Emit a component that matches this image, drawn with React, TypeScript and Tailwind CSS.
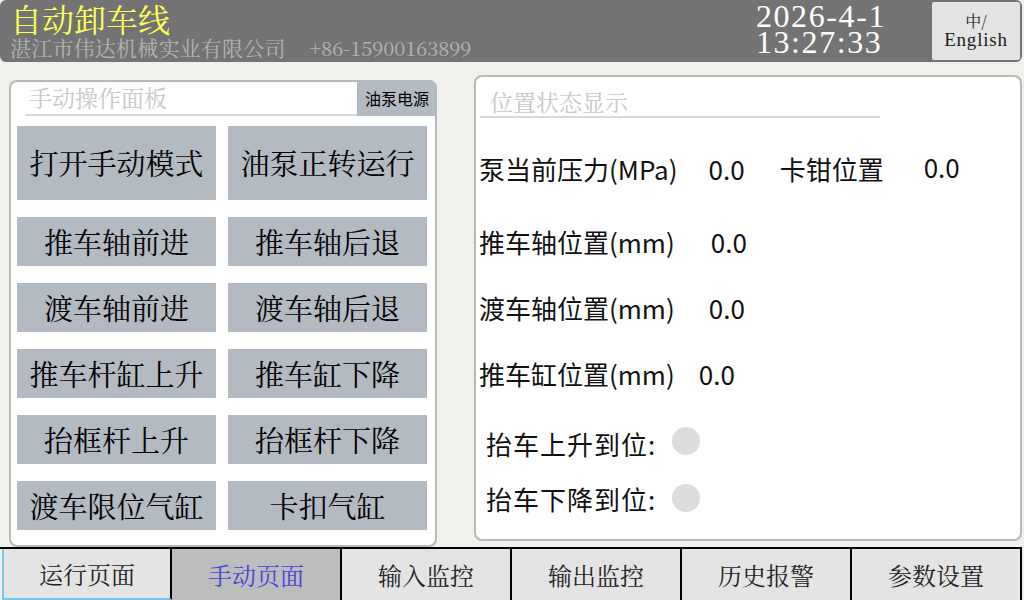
import React from "react";

const SERIF = { fontFamily: '"Noto Serif CJK SC", "Liberation Serif", "Noto Sans CJK SC", serif' };
const SANS = { fontFamily: '"Noto Sans CJK SC", "Noto Sans", sans-serif' };

const buttons: [string, string][] = [
  ["推车轴前进", "推车轴后退"],
  ["渡车轴前进", "渡车轴后退"],
  ["推车杆缸上升", "推车缸下降"],
  ["抬框杆上升", "抬框杆下降"],
  ["渡车限位气缸", "卡扣气缸"],
];

const tabs = ["运行页面", "手动页面", "输入监控", "输出监控", "历史报警", "参数设置"];

function OpButton({ label, tall }: { label: string; tall?: boolean }) {
  return (
    <div
      className={`flex items-center justify-center bg-[#b3bac2] text-[29px] text-black ${tall ? "h-[74px]" : "h-[49px]"}`}
      style={SERIF}
    >
      {label}
    </div>
  );
}

function Lamp() {
  return <span className="inline-block h-[28px] w-[28px] rounded-full bg-[#dcdcdc]" />;
}

export default function App() {
  return (
    <div className="relative h-[600px] w-[1024px] overflow-hidden bg-[#f0f0ec]">
      {/* header bar */}
      <div className="flex h-[62px] w-[1022px] items-stretch rounded-[6px] bg-[#737373]">
        <div className="flex flex-1 flex-col pl-[10px]">
          <div className="mt-[1px] h-[34px] text-[32px] leading-[34px] text-[#ffff55]" style={SERIF}>
            自动卸车线
          </div>
          <div className="mt-[1px] flex items-baseline text-[21px] leading-[22px] text-[#b4b4b4]" style={SERIF}>
            <span className="tracking-[0.2px]">湛江市伟达机械实业有限公司</span>
            <span className="ml-[24px] text-[20px]">+86-15900163899</span>
          </div>
        </div>
        <div
          className="mr-[46px] flex flex-col pt-[3px] text-[32px] leading-[26px] text-white"
          style={{ fontFamily: '"Liberation Serif", serif' }}
        >
          <span className="tracking-[1.6px]">2026-4-1</span>
          <span className="tracking-[1.6px]">13:27:33</span>
        </div>
        <div className="my-[2px] mr-[2px] flex w-[88px] flex-col items-center justify-center rounded-[2px] bg-[#e4e4e4] text-[19px] leading-[20px] text-[#222]">
          <span style={SERIF} className="text-[16px] leading-[18px]">中/</span>
          <span style={{ fontFamily: '"Liberation Serif", serif' }} className="tracking-[0.8px]">English</span>
        </div>
      </div>

      {/* body */}
      <div className="flex h-[485px] items-start">
        {/* manual operation panel */}
        <div className="ml-[9px] mt-[18px] h-[467px] w-[428px] rounded-[8px] border-2 border-[#b8b8b8] bg-white">
          <div className="flex h-[34px] items-stretch">
            <div className="ml-[14px] flex-1 border-b-2 border-[#d8d8d8] pl-[4px] text-[23px] leading-[32px] text-[#c8c8c8]" style={SERIF}>
              手动操作面板
            </div>
            <div
              className="-mr-[2px] -mt-[2px] flex h-[36px] w-[80px] items-center justify-center rounded-tr-[8px] bg-[#b3bac2] text-[16px] text-black"
              style={SANS}
            >
              油泵电源
            </div>
          </div>
          <div className="ml-[6px] mt-[10px] grid grid-cols-[199px_199px] gap-x-[12px] gap-y-[17px]">
            <OpButton label="打开手动模式" tall />
            <OpButton label="油泵正转运行" tall />
            {buttons.map(([a, b]) => (
              <React.Fragment key={a}>
                <OpButton label={a} />
                <OpButton label={b} />
              </React.Fragment>
            ))}
          </div>
        </div>

        {/* position status panel */}
        <div className="ml-[37px] mt-[13px] h-[466px] w-[548px] rounded-[8px] border-2 border-[#b8b8b8] bg-white">
          <div className="ml-[4px] mt-[10px] w-[400px] border-b-2 border-[#d8d8d8] pl-[10px] text-[23px] leading-[29px] text-[#c8c8c8]" style={SERIF}>
            位置状态显示
          </div>
          <div className="ml-[3px] text-[26px] text-[#111]" style={SANS}>
            <div className="mt-[33px] flex h-[36px] items-center leading-[36px]">
              <span>泵当前压力(MPa)</span>
              <span className="ml-[31px]">0.0</span>
              <span className="ml-[35px]">卡钳位置</span>
              <span className="ml-[40px] -mt-[4px]">0.0</span>
            </div>
            <div className="mt-[36px] flex h-[36px] items-center">
              <span>推车轴位置(mm)</span>
              <span className="ml-[36px]">0.0</span>
            </div>
            <div className="mt-[30px] flex h-[36px] items-center">
              <span>渡车轴位置(mm)</span>
              <span className="ml-[34px]">0.0</span>
            </div>
            <div className="mt-[30px] flex h-[36px] items-center">
              <span>推车缸位置(mm)</span>
              <span className="ml-[24px]">0.0</span>
            </div>
            <div className="ml-[7px] mt-[34px] flex h-[36px] items-center">
              <span className="tracking-[1px]">抬车上升到位:</span>
              <span className="ml-[16px] -mt-[4px] flex"><Lamp /></span>
            </div>
            <div className="ml-[7px] mt-[19px] flex h-[36px] items-center">
              <span className="tracking-[1px]">抬车下降到位:</span>
              <span className="ml-[16px] flex"><Lamp /></span>
            </div>
          </div>
        </div>
      </div>

      {/* bottom navigation */}
      <div className="flex h-[53px] w-[1022px] border-t-2 border-black">
        {tabs.map((t, i) => (
          <div
            key={t}
            className={`flex w-[170px] items-center justify-center border-r-2 text-[24px] ${
              i === 0
                ? "ml-[2px] border-b-2 border-l-2 border-l-[#7cc4f0] border-b-[#7cc4f0] border-r-black bg-[#e4e4e4] text-[#222]"
                : i === 1
                ? "border-black bg-[#bdbdbd] text-[#4646d6]"
                : "border-black bg-[#e4e4e4] text-[#222]"
            }`}
            style={SERIF}
          >
            {t}
          </div>
        ))}
      </div>
    </div>
  );
}
